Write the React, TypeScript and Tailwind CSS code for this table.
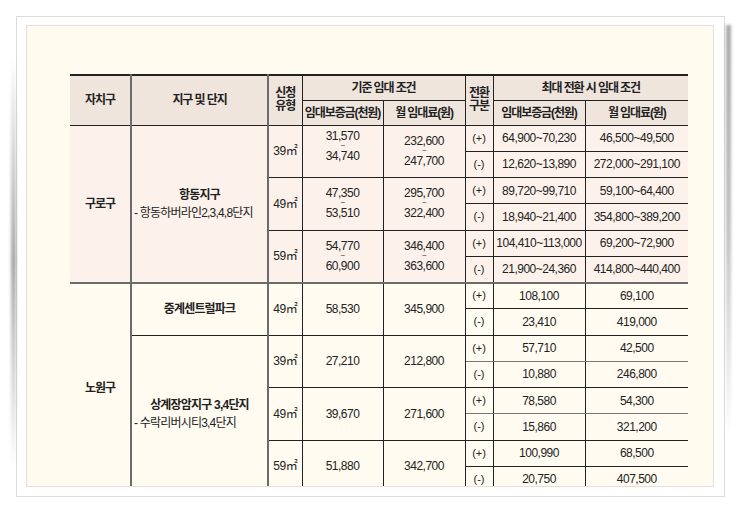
import React from "react";

type TypeRow = {
  size: string;
  dep: string[];
  rent: string[];
  plus: [string, string];
  minus: [string, string];
  soft?: boolean;
  lift?: boolean;
};

type Site = { name: string; sub?: string; types: TypeRow[] };

type Group = { gu: string; bg: string; sites: Site[] };

const groups: Group[] = [
  {
    gu: "구로구",
    bg: "bg-[#fcf2eb]",
    sites: [
      {
        name: "항동지구",
        sub: "- 항동하버라인2,3,4,8단지",
        types: [
          { size: "39㎡", dep: ["31,570", "34,740"], rent: ["232,600", "247,700"], plus: ["64,900~70,230", "46,500~49,500"], minus: ["12,620~13,890", "272,000~291,100"], lift: true },
          { size: "49㎡", dep: ["47,350", "53,510"], rent: ["295,700", "322,400"], plus: ["89,720~99,710", "59,100~64,400"], minus: ["18,940~21,400", "354,800~389,200"] },
          { size: "59㎡", dep: ["54,770", "60,900"], rent: ["346,400", "363,600"], plus: ["104,410~113,000", "69,200~72,900"], minus: ["21,900~24,360", "414,800~440,400"] },
        ],
      },
    ],
  },
  {
    gu: "노원구",
    bg: "bg-[#fffbf0]",
    sites: [
      {
        name: "중계센트럴파크",
        types: [
          { size: "49㎡", dep: ["58,530"], rent: ["345,900"], plus: ["108,100", "69,100"], minus: ["23,410", "419,000"] },
        ],
      },
      {
        name: "상계장암지구 3,4단지",
        sub: "- 수락리버시티3,4단지",
        types: [
          { size: "39㎡", dep: ["27,210"], rent: ["212,800"], plus: ["57,710", "42,500"], minus: ["10,880", "246,800"], soft: true },
          { size: "49㎡", dep: ["39,670"], rent: ["271,600"], plus: ["78,580", "54,300"], minus: ["15,860", "321,200"], soft: true },
          { size: "59㎡", dep: ["51,880"], rent: ["342,700"], plus: ["100,990", "68,500"], minus: ["20,750", "407,500"] },
        ],
      },
    ],
  },
];

const kr = "tracking-[-1.1px]";
const num = "tracking-[-0.5px]";

function Range({ vals }: { vals: string[] }) {
  if (vals.length === 1) return <span className={num}>{vals[0]}</span>;
  return (
    <div className={`flex flex-col items-center ${num}`}>
      <span className="leading-[13px]">{vals[0]}</span>
      <span className="h-[7px] leading-[5px] text-[8px]">~</span>
      <span className="leading-[13px]">{vals[1]}</span>
    </div>
  );
}

export default function App() {
  const head = "bg-[#efe5dd] font-bold border-b border-[#222] text-center align-middle";
  const gray = "border-r-2 border-r-[#6b6b6b]";

  return (
    <div
      className="relative w-[741px] h-[513px] bg-white overflow-hidden text-[#222]"
      style={{ fontFamily: '"Liberation Sans", "Noto Sans CJK KR", sans-serif' }}
    >
      <div className="pl-[16px] pt-[16px]">
        <div className="relative w-[709px] h-[481px] bg-white border border-[#dcdcdc] pl-[9px] pt-[8px]">
          {/* side shadows */}
          <div className="absolute -left-[6px] top-[40px] bottom-[30px] w-[5px] bg-linear-to-b from-transparent via-black/35 to-transparent blur-[1.5px]" />
          <div className="absolute -right-[7px] top-[8px] bottom-[60px] w-[5px] bg-linear-to-b from-black/35 via-black/25 to-transparent blur-[1.5px]" />

          <div className="w-[688px] h-[462px] bg-[#fffbef] border border-[#e2e0d8] overflow-hidden pl-[43px] pt-[48px]">
            <table className="table-fixed border-collapse w-[618px] text-[12px] leading-none">
              <colgroup>
                <col className="w-[61px]" />
                <col className="w-[137px]" />
                <col className="w-[34px]" />
                <col className="w-[81px]" />
                <col className="w-[82px]" />
                <col className="w-[28px]" />
                <col className="w-[92px]" />
                <col className="w-[103px]" />
              </colgroup>
              <thead>
                <tr className="h-[25px]">
                  <th rowSpan={2} className={`${head} ${gray} border-t-2 border-t-[#222] ${kr}`}>자치구</th>
                  <th rowSpan={2} className={`${head} ${gray} border-t-2 border-t-[#222] ${kr}`}>지구 및 단지</th>
                  <th rowSpan={2} className={`${head} border-r border-t-2 border-[#222] ${kr} leading-[13px]`}>
                    신청
                    <br />
                    유형
                  </th>
                  <th colSpan={2} className={`${head} border-r border-t-2 border-[#222] ${kr}`}>기준 임대 조건</th>
                  <th rowSpan={2} className={`${head} border-r border-t-2 border-[#222] ${kr} leading-[13px]`}>
                    전환
                    <br />
                    구분
                  </th>
                  <th colSpan={2} className={`${head} border-t-2 border-[#222] ${kr}`}>최대 전환 시 임대 조건</th>
                </tr>
                <tr className="h-[25px]">
                  <th className={`${head} border-r border-t border-[#222] ${kr}`}>임대보증금(천원)</th>
                  <th className={`${head} border-r border-t border-[#222] ${kr}`}>월 임대료(원)</th>
                  <th className={`${head} border-r border-t border-[#222] ${kr}`}>임대보증금(천원)</th>
                  <th className={`${head} border-t border-[#222] ${kr}`}>월 임대료(원)</th>
                </tr>
              </thead>
              <tbody>
                {groups.map((g, gi) => {
                  const total = g.sites.reduce((n, s) => n + s.types.length * 2, 0);
                  const lastGroup = gi === groups.length - 1;
                  const endB = lastGroup ? "border-b border-b-[#222]" : "border-b-2 border-b-[#6b6b6b]";
                  return g.sites.map((s, si) => {
                    const lastSite = si === g.sites.length - 1;
                    return s.types.map((t, ti) => {
                      const lastType = lastSite && ti === s.types.length - 1;
                      const bottom = lastType ? endB : "border-b border-b-[#222]";
                      const half = t.soft ? "border-b border-b-[#777]" : "border-b border-b-[#222]";
                      return (
                        <React.Fragment key={`${gi}-${si}-${ti}`}>
                          <tr className={`h-[26.25px] ${g.bg}`}>
                            {si === 0 && ti === 0 && (
                              <td rowSpan={total} className={`${gray} ${endB} text-center align-middle font-bold text-[12px] ${kr}`}>
                                {g.gu}
                              </td>
                            )}
                            {ti === 0 && (
                              <td
                                rowSpan={s.types.length * 2}
                                className={`${gray} ${lastSite ? endB : "border-b border-b-[#222]"} align-middle`}
                              >
                                <div className={`text-center font-bold tracking-[-0.8px] ${s.sub ? "pt-[1px]" : ""}`}>{s.name}</div>
                                {s.sub && <div className="text-left pl-[2px] mt-[6px] tracking-[-0.8px]">{s.sub}</div>}
                              </td>
                            )}
                            <td rowSpan={2} className={`border-r border-r-[#222] ${bottom} text-center align-middle ${num}`}>
                              {t.size}
                            </td>
                            <td rowSpan={2} className={`border-r border-r-[#222] ${bottom} text-center align-middle ${t.lift ? "pb-[9px]" : ""}`}>
                              <div className="flex justify-center">
                                <Range vals={t.dep} />
                              </div>
                            </td>
                            <td rowSpan={2} className={`border-r border-r-[#222] ${bottom} text-center align-middle`}>
                              <div className="flex justify-center">
                                <Range vals={t.rent} />
                              </div>
                            </td>
                            <td className={`border-r border-r-[#222] ${half} text-center align-middle text-[11px]`}>(+)</td>
                            <td className={`border-r border-r-[#222] ${half} text-center align-middle ${num}`}>{t.plus[0]}</td>
                            <td className={`${half} text-center align-middle ${num}`}>{t.plus[1]}</td>
                          </tr>
                          <tr className={`h-[26.25px] ${g.bg}`}>
                            <td className={`border-r border-r-[#222] ${bottom} text-center align-middle text-[11px]`}>(-)</td>
                            <td className={`border-r border-r-[#222] ${bottom} text-center align-middle ${num}`}>{t.minus[0]}</td>
                            <td className={`${bottom} text-center align-middle ${num}`}>{t.minus[1]}</td>
                          </tr>
                        </React.Fragment>
                      );
                    });
                  });
                })}
              </tbody>
            </table>
          </div>
        </div>
      </div>
    </div>
  );
}
